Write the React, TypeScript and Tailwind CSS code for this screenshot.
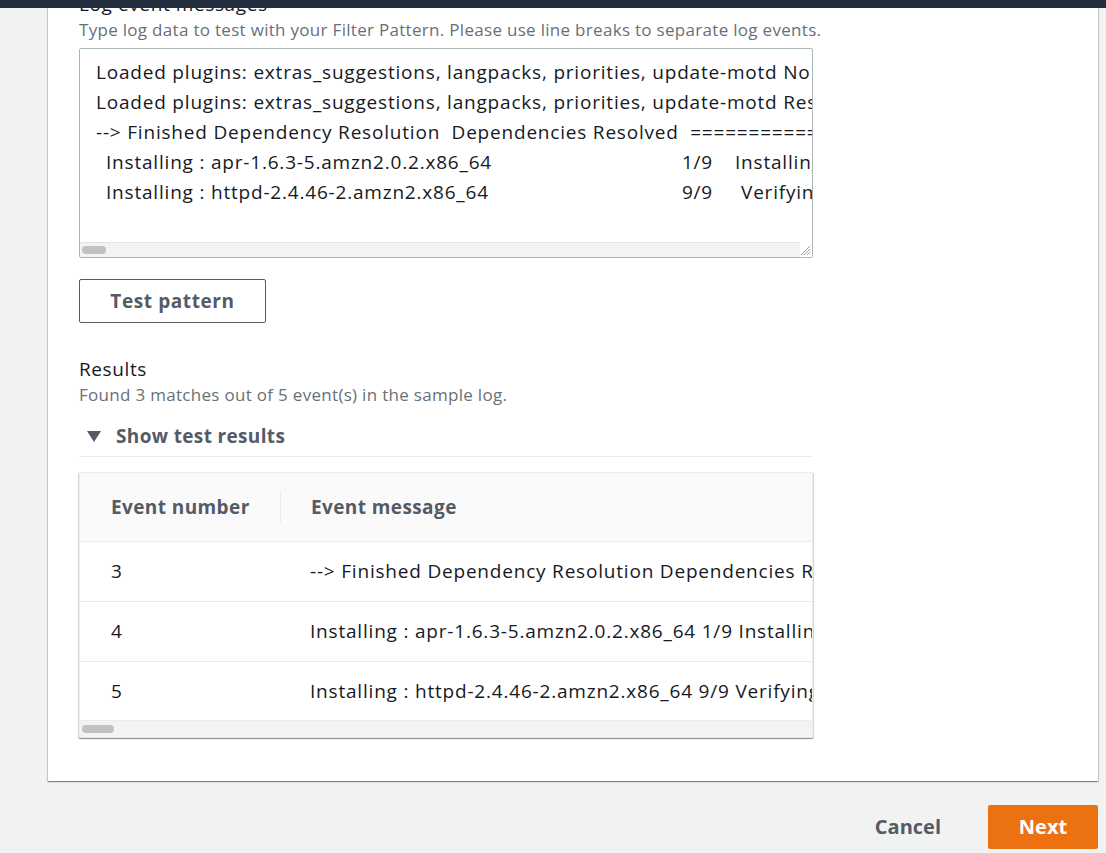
import React from "react";

const font = { fontFamily: '"Open Sans", "Noto Sans", Arial, sans-serif' };

function ScrollTrack({ thumbW, h, className = "" }: { thumbW: number; h: number; className?: string }) {
  return (
    <div className={`flex items-center bg-[#f3f3f3] border-t border-[#e4e4e4] ${className}`} style={{ height: h }}>
      <div className="ml-[2px] h-[8px] rounded-full bg-[#c1c1c1]" style={{ width: thumbW }} />
    </div>
  );
}

export default function App() {
  const rows = [
    { n: "3", m: "--> Finished Dependency Resolution Dependencies Resolved ================================================================================", h: "h-[60px]" },
    { n: "4", m: "Installing : apr-1.6.3-5.amzn2.0.2.x86_64 1/9 Installing : apr-util-bdb-1.6.1-5.amzn2.0.2.x86_64", h: "h-[60px]" },
    { n: "5", m: "Installing : httpd-2.4.46-2.amzn2.x86_64 9/9 Verifying : apr-util-bdb-1.6.1-5.amzn2.0.2.x86_64", h: "h-[59px]" },
  ];
  return (
    <div className="relative h-[853px] w-[1106px] overflow-hidden bg-[#f1f2f2] text-[#16191f]" style={font}>
      <div className="absolute left-0 top-0 z-10 h-[8px] w-full bg-[#232f3e]" />
      <div className="pl-[48px] pr-[8px]">
        <div className="-mt-[8px] bg-white pl-[31px] pb-[43px] shadow-[0_1px_1px_0_rgba(0,28,36,0.3),1px_1px_1px_0_rgba(0,28,36,0.15),-1px_1px_1px_0_rgba(0,28,36,0.15)]">
          <div className="mb-[3px] text-[19px] leading-[24px] tracking-[0.6px] text-[#16191f]">Log event messages</div>
          <div className="whitespace-nowrap text-[17px] leading-[22px] tracking-[0.3px] text-[#687078]">
            Type log data to test with your Filter Pattern. Please use line breaks to separate log events.
          </div>
          <div className="relative mt-[7px] flex h-[210px] w-[734px] flex-col overflow-hidden rounded-[2px] border border-[#aab7b8]">
            <div className="flex-1 overflow-hidden whitespace-pre pl-[16px] pt-[8px] text-[19px] leading-[30px] tracking-[0.8px] text-[#16191f]">
              <div>Loaded plugins: extras_suggestions, langpacks, priorities, update-motd No packages marked for update</div>
              <div>Loaded plugins: extras_suggestions, langpacks, priorities, update-motd Resolving Dependencies</div>
              <div>{"--> Finished Dependency Resolution  Dependencies Resolved  ================================================"}</div>
              <div className="flex">
                <span className="flex w-[617px] shrink-0 justify-between pl-[10px]">
                  <span>Installing : apr-1.6.3-5.amzn2.0.2.x86_64</span>
                  <span>1/9</span>
                </span>
                <span className="pl-[22px]">Installing : apr-util-bdb-1.6.1-5.amzn2.0.2.x86_64</span>
              </div>
              <div className="flex">
                <span className="flex w-[617px] shrink-0 justify-between pl-[10px]">
                  <span>Installing : httpd-2.4.46-2.amzn2.x86_64</span>
                  <span>9/9</span>
                </span>
                <span className="pl-[28px]">Verifying  : apr-util-bdb-1.6.1-5.amzn2.0.2.x86_64</span>
              </div>
            </div>
            <div className="flex">
              <ScrollTrack thumbW={24} h={15} className="flex-1" />
              <div className="relative h-[15px] w-[12px] bg-white">
                <svg className="absolute bottom-[1px] right-[1px]" width="11" height="11" viewBox="0 0 11 11">
                  <path d="M10 1L1 10M10 4L4 10M10 7L7 10" stroke="#9aa0a6" strokeWidth="1" />
                </svg>
              </div>
            </div>
          </div>

          <button className="mt-[21px] flex h-[44px] w-[187px] items-center justify-center rounded-[2px] border border-[#545b64] bg-white text-[19px] font-bold tracking-[0.6px] text-[#545b64]">
            Test pattern
          </button>

          <div className="mt-[33px] text-[19px] leading-[26px] tracking-[0.6px] text-[#16191f]">Results</div>
          <div className="mt-[2px] whitespace-nowrap text-[17px] leading-[22px] tracking-[0.3px] text-[#687078]">
            Found 3 matches out of 5 event(s) in the sample log.
          </div>

          <div className="mt-[16px] w-[734px] border-b border-[#eaeded] pb-[6px]">
            <div className="flex items-center text-[19px] font-bold leading-[28px] tracking-[0.35px] text-[#545b64]">
              <svg className="ml-[8px] mr-[15px]" width="14" height="12" viewBox="0 0 14 12">
                <path d="M0 1h14L7 12z" fill="#545b64" />
              </svg>
              Show test results
            </div>
          </div>

          <div className="mt-[15px] w-[734px] overflow-hidden rounded-[1px] border border-[#eaeded] bg-white shadow-[0_1px_1px_0_rgba(0,28,36,0.3),1px_1px_1px_0_rgba(0,28,36,0.15),-1px_1px_1px_0_rgba(0,28,36,0.15)]">
            <div className="flex h-[69px] items-center border-b border-[#eaeded] bg-[#fafafa] text-[19px] font-bold tracking-[0.4px] text-[#545b64]">
              <div className="flex h-[32px] w-[201px] shrink-0 items-center border-r border-[#eaeded] pl-[31px]">Event number</div>
              <div className="pl-[30px]">Event message</div>
            </div>
            {rows.map((r) => (
              <div key={r.n} className={`flex ${r.h} items-center border-b border-[#eaeded] text-[19px] tracking-[0.8px] text-[#16191f]`}>
                <div className="w-[201px] shrink-0 pl-[31px]">{r.n}</div>
                <div className="overflow-hidden whitespace-nowrap pl-[29px]">{r.m}</div>
              </div>
            ))}
            <ScrollTrack thumbW={32} h={16} className="border-t-0" />
          </div>
        </div>

        <div className="mt-[24px] flex items-center justify-end">
          <button className="mr-[27px] px-[20px] text-[20px] font-bold text-[#545b64]">Cancel</button>
          <button className="flex h-[44px] w-[110px] items-center justify-center rounded-[2px] bg-[#ec7211] text-[20px] font-bold text-white">
            Next
          </button>
        </div>
      </div>
    </div>
  );
}
